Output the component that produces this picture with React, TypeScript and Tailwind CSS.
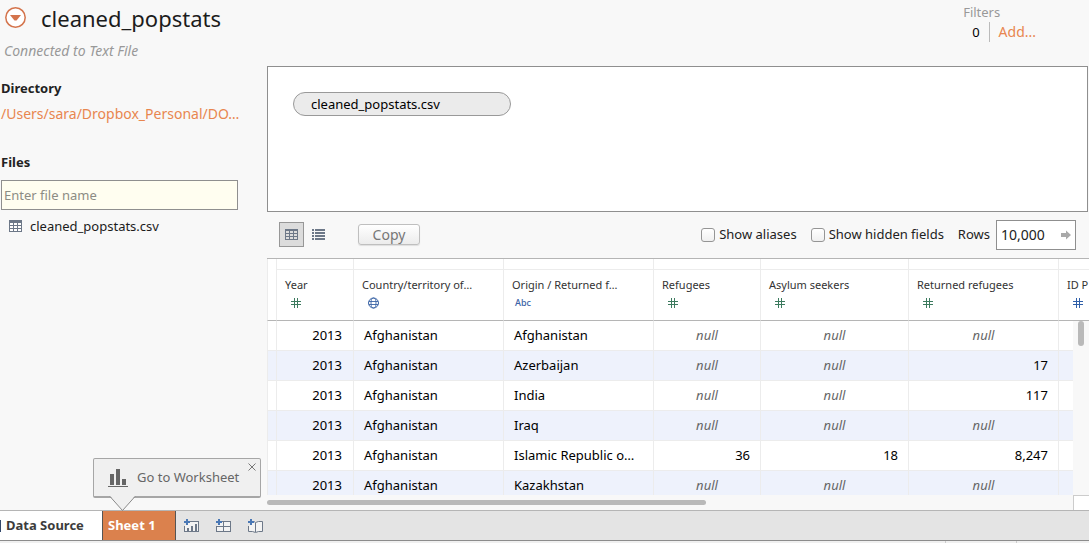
import React from "react";

type ColumnKind = "number" | "geo" | "text";

interface Column {
  label: string;
  kind: ColumnKind;
  tone: string;
}

const columns: Column[] = [
  { label: "Year", kind: "number", tone: "text-[#3c7a5e]" },
  { label: "Country/territory of…", kind: "geo", tone: "text-[#3a63a5]" },
  { label: "Origin / Returned f…", kind: "text", tone: "text-[#3a63a5]" },
  { label: "Refugees", kind: "number", tone: "text-[#3c7a5e]" },
  { label: "Asylum seekers", kind: "number", tone: "text-[#3c7a5e]" },
  { label: "Returned refugees", kind: "number", tone: "text-[#3c7a5e]" },
  { label: "ID P", kind: "number", tone: "text-[#2f5fa8]" },
];

interface Row {
  origin: string;
  values: (string | null)[];
}

const rows: Row[] = [
  { origin: "Afghanistan", values: [null, null, null] },
  { origin: "Azerbaijan", values: [null, null, "17"] },
  { origin: "India", values: [null, null, "117"] },
  { origin: "Iraq", values: [null, null, null] },
  { origin: "Islamic Republic o…", values: ["36", "18", "8,247"] },
  { origin: "Kazakhstan", values: [null, null, null] },
];

function GridIcon() {
  return (
    <svg width="13" height="12" viewBox="0 0 13 12" shapeRendering="crispEdges" aria-hidden="true">
      <rect width="13" height="12" fill="#6d7888" />
      <g fill="#fff">
        <path d="M1 3h3v2H1zM5 3h3v2H5zM9 3h3v2H9zM1 6h3v2H1zM5 6h3v2H5zM9 6h3v2H9zM1 9h3v2H1zM5 9h3v2H5zM9 9h3v2H9z" />
      </g>
    </svg>
  );
}

function OutlineGridIcon() {
  return (
    <svg width="13" height="11" viewBox="0 0 13 11" shapeRendering="crispEdges" aria-hidden="true">
      <path
        fill="#6d7888"
        fillRule="evenodd"
        d="M0 0h13v11H0zM1 2h3v2H1zM5 2h3v2H5zM9 2h3v2H9zM1 5h3v2H1zM5 5h3v2H5zM9 5h3v2H9zM1 8h3v2H1zM5 8h3v2H5zM9 8h3v2H9z"
      />
    </svg>
  );
}

function ListIcon() {
  return (
    <svg width="13" height="11" viewBox="0 0 13 11" shapeRendering="crispEdges" aria-hidden="true">
      <path fill="#6d7888" d="M0 0h2v2H0zM3 0h10v2H3zM0 3h2v2H0zM3 3h10v2H3zM0 6h2v2H0zM3 6h10v2H3zM0 9h2v2H0zM3 9h10v2H3z" />
    </svg>
  );
}

function KindIcon({ kind }: { kind: ColumnKind }) {
  if (kind === "text") return <span className="text-[9px] leading-3 font-medium">Abc</span>;
  if (kind === "geo")
    return (
      <svg width="11" height="12" viewBox="0 0 11 12" fill="none" stroke="currentColor" aria-hidden="true">
        <circle cx="5.5" cy="6" r="5" />
        <ellipse cx="5.5" cy="6" rx="2.5" ry="5" strokeWidth="0.9" />
        <path d="M1 4.5h9M1 7.5h9" strokeWidth="0.9" />
      </svg>
    );
  return (
    <svg width="10" height="10" viewBox="0 0 10 10" shapeRendering="crispEdges" fill="currentColor" aria-hidden="true">
      <path d="M3 0h1v10H3zM6 0h1v10H6zM0 3h10v1H0zM0 6h10v1H0z" />
    </svg>
  );
}

function Value({ value }: { value: string | null }) {
  return value === null ? (
    <td className="border-r border-b border-[#ececec] text-center text-[#666] italic">null</td>
  ) : (
    <td className="border-r border-b border-[#ececec] pr-[10px] text-right">{value}</td>
  );
}

function Sidebar() {
  return (
    <aside className="flex w-[267px] shrink-0 flex-col">
      <div className="flex h-[35px] items-center gap-[15px] pl-[5px]">
        <button type="button" aria-label="Data source menu">
          <svg width="21" height="21" viewBox="0 0 21 21" aria-hidden="true">
            <circle cx="10.5" cy="10.5" r="9.7" fill="#fff" stroke="#d4744c" strokeWidth="1.5" />
            <path d="M5 8h11l-4.5 5.500h-2z" fill="#d4744c" />
          </svg>
        </button>
        <h1 className="text-[22px] leading-6 text-[#1c1c1c]">cleaned_popstats</h1>
      </div>
      <p className="mt-[7px] pl-1 text-[14px] leading-[18px] text-[#999] italic">Connected to Text File</p>
      <h2 className="mt-[19px] pl-px leading-[18px] font-bold text-[#222]">Directory</h2>
      <a href="#directory" className="mt-2 pl-px text-[14px] leading-[18px] text-[#e8864f]">
        /Users/sara/Dropbox_Personal/DO…
      </a>
      <label htmlFor="file-name" className="mt-[30px] pl-px leading-[18px] font-bold text-[#222]">
        Files
      </label>
      <input
        id="file-name"
        type="text"
        placeholder="Enter file name"
        className="mt-[9px] mr-[29px] ml-px h-[30px] border border-[#8f8f8f] bg-[#fffef0] px-[2px] placeholder:text-[#8c8c84] focus:outline-none"
      />
      <button type="button" className="mt-[7px] flex items-center gap-2 pl-[9px] text-left leading-[18px] text-[#1c1c1c]">
        <GridIcon />
        cleaned_popstats.csv
      </button>
    </aside>
  );
}

function Toolbar() {
  return (
    <div className="flex h-[46px] shrink-0 items-center pr-[13px] pb-px pl-3">
      <button type="button" aria-label="Grid view" className="flex size-[25px] items-center justify-center border border-[#979797] bg-[#dcdcdc]">
        <OutlineGridIcon />
      </button>
      <button type="button" aria-label="List view" className="ml-2 flex">
        <ListIcon />
      </button>
      <button
        type="button"
        className="ml-[33px] h-[21px] w-[62px] rounded-[3px] border border-[#bfbfbf] bg-linear-to-b from-white to-[#ececec] text-[14px] leading-[18px] text-[#777] shadow-[0_1px_1px_rgba(0,0,0,0.1)]"
      >
        Copy
      </button>
      <div className="ml-auto flex items-center">
        <label className="flex items-center gap-1">
          <input type="checkbox" className="size-[14px] appearance-none rounded-[3px] border border-[#959595] bg-linear-to-b from-white to-[#f0f0f0]" />
          Show aliases
        </label>
        <label className="ml-[14px] flex items-center gap-1">
          <input type="checkbox" className="size-[14px] appearance-none rounded-[3px] border border-[#959595] bg-linear-to-b from-white to-[#f0f0f0]" />
          Show hidden fields
        </label>
        <label htmlFor="row-count" className="ml-[14px]">
          Rows
        </label>
        <div className="ml-[6px] flex h-[30px] w-20 items-center border border-[#8f8f8f] bg-white pr-1 pl-1">
          <input id="row-count" type="text" defaultValue="10,000" className="h-5 w-full min-w-0 text-[14px] focus:outline-none" />
          <button type="button" aria-label="Apply row count">
            <svg width="10" height="10" viewBox="0 0 10 10" fill="#a9a9a9" aria-hidden="true">
              <path d="M0 3h5V.5L10 5 5 9.5V7H0z" />
            </svg>
          </button>
        </div>
      </div>
    </div>
  );
}

function DataGrid() {
  return (
    <div className="relative min-h-0 flex-1 overflow-hidden border-t border-[#b5b5b5]">
      <table className="w-[941px] table-fixed border-separate border-spacing-0">
        <colgroup>
          <col className="w-[10px]" />
          <col className="w-[77px]" />
          <col className="w-[150px]" />
          <col className="w-[150px]" />
          <col className="w-[107px]" />
          <col className="w-[148px]" />
          <col className="w-[150px]" />
          <col className="w-[149px]" />
        </colgroup>
        <thead className="bg-white">
          <tr className="h-[11px]">
            <td className="border-x border-[#ececec] p-0" />
            {columns.map((column) => (
              <td key={column.label} className="border-r border-b border-[#ececec] p-0" />
            ))}
          </tr>
          <tr className="h-[51px]">
            <td className="border-x border-b border-x-[#ececec] border-b-[#b5b5b5] p-0" />
            {columns.map((column) => (
              <th
                key={column.label}
                scope="col"
                className="border-r border-b border-r-[#ececec] border-b-[#b5b5b5] p-0 pl-2 text-left align-top text-[11px] font-normal whitespace-nowrap text-[#333]"
              >
                <div className="mt-[7px] leading-4">{column.label}</div>
                <div className={`flex h-5 items-center ${column.kind === "text" ? "pl-[3px]" : "pl-[6px]"} ${column.tone}`}>
                  <KindIcon kind={column.kind} />
                </div>
              </th>
            ))}
          </tr>
        </thead>
        <tbody className="text-black">
          {rows.map((row) => (
            <tr key={row.origin} className="h-[30px] bg-white even:bg-[#eef2fc]">
              <td className="border-x border-b border-[#ececec] p-0" />
              <td className="border-r border-b border-[#ececec] pr-[11px] text-right">2013</td>
              <td className="border-r border-b border-[#ececec] pl-[10px]">Afghanistan</td>
              <td className="border-r border-b border-[#ececec] pl-[10px] whitespace-nowrap">{row.origin}</td>
              {row.values.map((value, index) => (
                <Value key={index} value={value} />
              ))}
              <td className="border-b border-[#ececec]" />
            </tr>
          ))}
        </tbody>
      </table>
      <div className="absolute top-[62px] right-0 bottom-0 flex w-4 justify-center bg-[#f8f8f8]">
        <div className="h-[25px] w-[6px] rounded-full bg-[#b9b9b9]" />
      </div>
    </div>
  );
}

function WorksheetHint() {
  return (
    <div className="absolute bottom-[45px] left-[93px] flex h-10 w-[168px] items-center gap-[9px] rounded-[2px] border border-b-2 border-[#a6a6a6] bg-[#f0f0f0] pl-[14px] text-[#666]">
      <svg width="20" height="19" viewBox="0 0 20 19" shapeRendering="crispEdges" fill="#666" aria-hidden="true">
        <path d="M2 6h4v11H2zM8 1h4v16H8zM14 11h4v6h-4zM0 18h20v1H0z" />
      </svg>
      <button type="button">Go to Worksheet</button>
      <button type="button" aria-label="Close" className="absolute top-1 right-1">
        <svg width="8" height="8" viewBox="0 0 8 8" stroke="#777" strokeWidth="1" aria-hidden="true">
          <path d="M.5.5l7 7M7.5.5l-7 7" />
        </svg>
      </button>
      <svg className="absolute top-[37px] left-[15px]" width="27" height="15" viewBox="0 0 27 15" aria-hidden="true">
        <path d="M1 0l12.5 14L26 0z" fill="#f0f0f0" />
        <path d="M1 .5l12.5 14L26 .5" fill="none" stroke="#888" />
      </svg>
    </div>
  );
}

function Plus() {
  return <path d="M2 0h2v2h2v2H4v2H2V4H0V2h2z" fill="#4a78b5" />;
}

function SheetTabs() {
  return (
    <footer className="relative shrink-0">
      <nav className="flex h-[31px] items-stretch border-t border-b border-t-[#b5b5b5] border-b-[#8c8c8c] bg-[#e4e4e4]">
        <button type="button" className="flex w-[102px] items-center gap-[5px] bg-white font-bold text-[#3c3c3c]">
          <span className="h-3 w-px bg-[#33486b]" />
          Data Source
        </button>
        <button type="button" className="w-[74px] border-x border-[#555] bg-[#db814d] pl-[5px] text-left font-bold text-white">
          Sheet 1
        </button>
        <div className="flex items-center gap-4 pl-2">
          <button type="button" aria-label="New worksheet">
            <svg width="16" height="14" viewBox="0 0 16 14" shapeRendering="crispEdges" aria-hidden="true">
              <path d="M6 2.5h8.5v10H.5V7" fill="#f3f3f3" stroke="#6d7888" />
              <path d="M3 9h2v4H3zM7 7h2v6H7zM11 5h2v8h-2z" fill="#6d7888" />
              <Plus />
            </svg>
          </button>
          <button type="button" aria-label="New dashboard">
            <svg width="16" height="14" viewBox="0 0 16 14" shapeRendering="crispEdges" aria-hidden="true">
              <path d="M6 2.5h8.5v10H.5V7z" fill="#f3f3f3" />
              <path d="M6 2.5h8.5v10H.5V7M.5 7.5h14M7.5 2.5v10" fill="none" stroke="#6d7888" />
              <Plus />
            </svg>
          </button>
          <button type="button" aria-label="New story">
            <svg width="16" height="14" viewBox="0 0 16 14" aria-hidden="true">
              <path d="M6 2.5l1.500 1 3-1h4v10h-4l-3 1-3-1h-4V7" fill="#f3f3f3" stroke="#6d7888" />
              <path d="M7.500 4v9" stroke="#6d7888" />
              <Plus />
            </svg>
          </button>
        </div>
      </nav>
      <div className="flex h-[2px] justify-end bg-[#f0f0f0] pr-[72px]">
        <div className="w-[72px] border-x border-[#ccc]" />
      </div>
      <WorksheetHint />
    </footer>
  );
}

export default function App() {
  return (
    <div className="flex h-screen flex-col bg-[#f8f8f8] font-['Noto_Sans','Open_Sans',sans-serif] text-[13px] text-[#222]">
      <div className="flex min-h-0 flex-1">
        <Sidebar />
        <main className="flex min-w-0 flex-1 flex-col">
          <section className="flex h-[66px] shrink-0 justify-end pr-[53px]">
            <div className="pt-[2px] leading-5">
              <h2 className="text-[#999]">Filters</h2>
              <div className="flex pl-[9px]">
                <span className="text-black">0</span>
                <span className="mr-[9px] ml-[9px] w-px bg-[#bbb]" />
                <a href="#add-filter" className="text-[14px] text-[#e8864f]">
                  Add...
                </a>
              </div>
            </div>
          </section>
          <section className="mr-px h-[146px] shrink-0 border border-[#8f8f8f] bg-white pt-[25px] pl-[25px]">
            <button type="button" className="block h-6 w-[218px] rounded-full border border-[#999] bg-[#ebebeb] pl-[17px] text-left leading-[22px] text-black">
              cleaned_popstats.csv
            </button>
          </section>
          <Toolbar />
          <DataGrid />
          <div className="flex h-[15px] shrink-0 items-center">
            <div className="h-[5px] w-[439px] rounded-full bg-[#b9b9b9]" />
            <div className="ml-auto h-[15px] w-4 border-t border-l border-[#ccc] bg-white" />
          </div>
        </main>
      </div>
      <SheetTabs />
    </div>
  );
}
